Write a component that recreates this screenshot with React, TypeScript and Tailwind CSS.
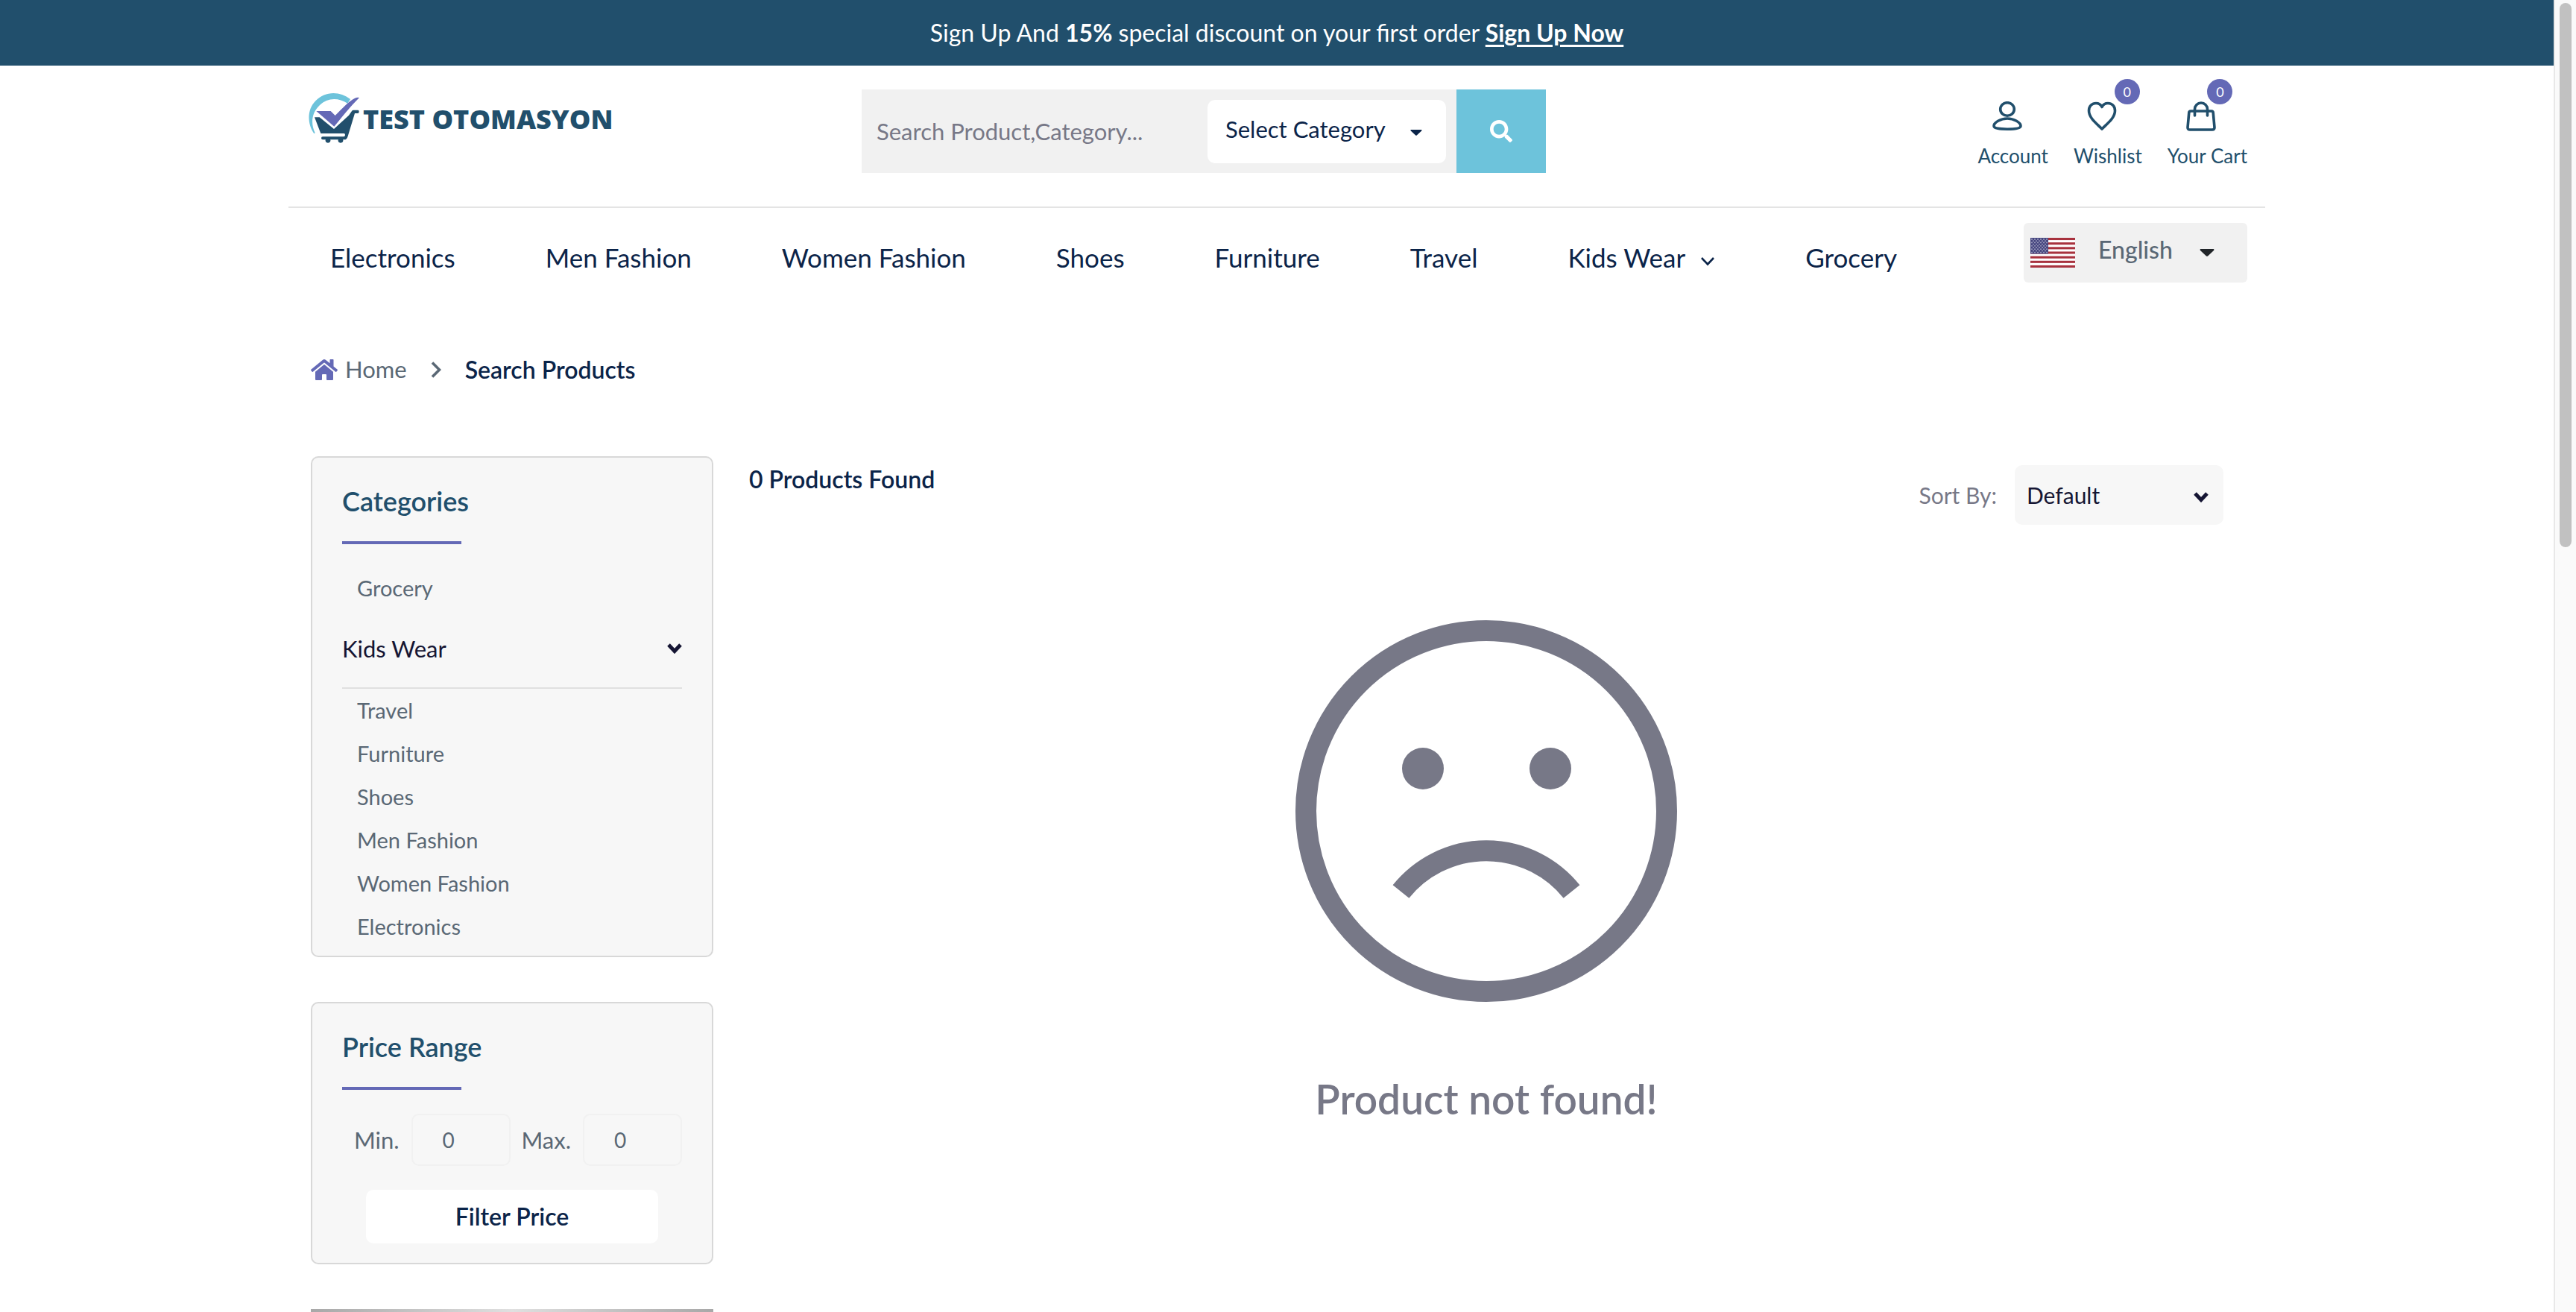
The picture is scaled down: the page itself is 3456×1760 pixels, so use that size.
import React from 'react';
import { FaHome, FaSearch } from 'react-icons/fa';

const Logo = () => (
  <a href="#" aria-label="Test Otomasyon" className="flex h-[70px] items-start text-[#214f6c]">
    <svg viewBox="100 100 210 210" className="size-[70px] shrink-0" aria-hidden="true">
      <path
        fill="#6dc3db"
        d="M125 269C98 230 95 172 132 136 168 98 228 96 271 130L260 147C222 122 178 124 148 154 116 184 110 226 129 266Z"
      />
      <path fill="#6469b6" d="M134 178H192L210 196C238 168 264 139 288 127Q298 122 307 124C270 160 235 205 206 240Z" />
      <path
        fill="#214f6c"
        d="M127 203h20l58 47 60-55 12-17q2-4 7-4h18q4 0 4 6t-4 7h-13l-28 92q-4 14-14 14H160q-6 0-6-6t6-6h84q6 0 6-7t-6-6h-92z"
      />
      <circle cx="181" cy="296" r="10" fill="#214f6c" />
      <circle cx="232" cy="296" r="10" fill="#214f6c" />
    </svg>
    <span className="mt-1 ml-1 font-['Open_Sans'] text-[36px] leading-[66px] font-extrabold whitespace-nowrap">
      TEST OTOMASYON
    </span>
  </a>
);

const Caret = ({ className }: { className: string }) => (
  <svg viewBox="0 0 20 10" className={className} aria-hidden="true">
    <path d="M1 0H19Q20 1 19 2L11 9.500Q10 10 9 9.500L1 2Q0 1 1 0Z" fill="currentColor" />
  </svg>
);

const Chevron = ({ className, weight }: { className: string; weight: number }) => (
  <svg viewBox="0 0 20 14" className={className} fill="none" stroke="currentColor" strokeWidth={weight} aria-hidden="true">
    <path d="M2 2L10 10.500L18 2" />
  </svg>
);

const strokes = { fill: 'none', stroke: 'currentColor', strokeWidth: 3.6, strokeLinejoin: 'round', strokeLinecap: 'round' } as const;

const UserIcon = () => (
  <svg viewBox="0 0 40 40" className="size-10" {...strokes} aria-hidden="true">
    <ellipse cx="20" cy="10.500" rx="9.300" ry="8.800" />
    <path d="M20 23C29 23 38 28.500 38 33C38 36.300 30 37.200 20 37.200S2 36.300 2 33C2 28.500 11 23 20 23Z" />
  </svg>
);

const HeartIcon = () => (
  <svg viewBox="0 0 40 40" className="size-10" {...strokes} aria-hidden="true">
    <path d="M20 37C12 29 2.500 22 2.500 12.500C2.500 6 7 2.500 12 2.500C15.500 2.500 18.500 4.500 20 7.500C21.500 4.500 24.500 2.500 28 2.500C33 2.500 37.500 6 37.500 12.500C37.500 22 28 29 20 37Z" />
  </svg>
);

const BagIcon = () => (
  <svg viewBox="0 0 40 40" className="size-10" {...strokes} aria-hidden="true">
    <path d="M6 13H34Q36 13 36.200 15L38 35Q38 38 35 38H5Q2 38 2 35L3.800 15Q4 13 6 13Z" />
    <path d="M11.500 19V10.500a8.500 8.500 0 0117 0V19" />
  </svg>
);

const Flag = () => (
  <svg viewBox="0 0 60 40" className="h-10 w-[60px]" aria-hidden="true">
    <rect width="60" height="40" fill="#fff" />
    {[0, 2, 4, 6, 8, 10, 12].map((i) => (
      <rect key={i} y={(i * 40) / 13} width="60" height={40 / 13} fill="#a8323e" />
    ))}
    <rect width="24" height="21.500" fill="#46467f" />
    {[0, 1, 2, 3, 4, 5, 6, 7, 8].map((r) =>
      [0, 1, 2, 3, 4, 5].map((c) =>
        r % 2 === 1 && c === 5 ? null : (
          <circle key={`${r}-${c}`} cx={2 + c * 4 + (r % 2) * 2} cy={2 + r * 2.2} r="0.9" fill="#a9a9c6" />
        ),
      ),
    )}
  </svg>
);

const Action = ({ label, icon, badge }: { label: string; icon: React.ReactNode; badge?: string }) => (
  <a href="#" className="flex flex-col items-center gap-4">
    <span className="relative mr-4">
      {icon}
      {badge && (
        <span
          className={`absolute -top-[30px] flex size-[34px] items-center justify-center rounded-full bg-[#6469b6] text-[18px] text-white ${badge}`}
        >
          0
        </span>
      )}
    </span>
    <span className="text-[26px] leading-[34px]">{label}</span>
  </a>
);

const NAV = ['Electronics', 'Men Fashion', 'Women Fashion', 'Shoes', 'Furniture', 'Travel', 'Kids Wear', 'Grocery'];
const CATEGORIES = ['Travel', 'Furniture', 'Shoes', 'Men Fashion', 'Women Fashion', 'Electronics'];

const Card = ({ title, children }: { title: string; children: React.ReactNode }) => (
  <section className="rounded-[10px] border-2 border-[#d8d8d8] bg-[#f7f7f7] px-10 pt-9">
    <h2 className="text-[36px] leading-[44px] font-semibold text-[#214f6c]">{title}</h2>
    <div className="mt-8 h-1 w-40 bg-[#6469b6]" />
    {children}
  </section>
);

const CategoryLink = ({ name }: { name: string }) => (
  <li>
    <a href="#" className="block pl-5 text-[29px] leading-[58px] text-[#5a6875]">
      {name}
    </a>
  </li>
);

const PriceField = ({ id, label }: { id: string; label: string }) => (
  <div className="flex items-center">
    <label htmlFor={id} className="text-[31px] text-[#5a6875]">
      {label}
    </label>
    <input
      id={id}
      defaultValue="0"
      className="ml-4 h-[70px] w-[133px] rounded-[10px] border-2 border-[#f1f1f1] bg-transparent pl-10 text-[28px] text-[#5a6875]"
    />
  </div>
);

export default function App() {
  return (
    <div className="flex h-screen overflow-hidden bg-white font-[Lato,sans-serif] text-[#0b2449]">
      <div className="min-w-0 flex-1">
        <div className="bg-[#214f6c] text-center text-[32px] leading-[88px] text-white">
          Sign Up And <b>15%</b> special discount on your first order{' '}
          <a href="#" className="font-bold underline decoration-[3px] underline-offset-4">
            Sign Up Now
          </a>
        </div>

        <div className="mx-auto max-w-[2652px]">
          <header className="flex h-[191px] items-start border-b-2 border-[#e4e4e4] px-6">
            <div className="w-[745px] shrink-0 pt-[35px] pl-0.5">
              <Logo />
            </div>
            <form className="mt-8 flex h-28 w-[918px]">
              <div className="flex flex-1 items-center bg-[#f1f1f1] pr-3.5">
                <input
                  aria-label="Search"
                  placeholder="Search Product,Category..."
                  className="h-full min-w-0 flex-1 bg-transparent pl-5 text-[31px] outline-none placeholder:text-[#777887]"
                />
                <div className="relative h-[85px] w-80">
                  <select
                    aria-label="Category"
                    className="h-full w-full appearance-none rounded-[10px] bg-white pb-1.5 pl-6 text-[31px]"
                  >
                    <option>Select Category</option>
                  </select>
                  <Caret className="pointer-events-none absolute top-10 right-8 h-2 w-4" />
                </div>
              </div>
              <button
                type="button"
                aria-label="Search"
                className="flex w-[120px] items-center justify-center bg-[#6dc3db] text-white"
              >
                <FaSearch className="size-[30px]" />
              </button>
            </form>
            <div className="mt-12 ml-auto flex gap-[34px] text-[#214f6c]">
              <Action label="Account" icon={<UserIcon />} />
              <Action label="Wishlist" icon={<HeartIcon />} badge="left-[37px]" />
              <Action label="Your Cart" icon={<BagIcon />} badge="left-[28px]" />
            </div>
          </header>

          <div className="flex items-center justify-between px-6 pt-5">
            <nav className="flex items-center gap-[121px] pt-3 pl-8 text-[35px] leading-[44px]">
              {NAV.map((item) => (
                <a key={item} href="#" className="flex items-center whitespace-nowrap">
                  {item}
                  {item === 'Kids Wear' && <Chevron weight={2.6} className="mt-3 ml-5 h-3.5 w-5" />}
                </a>
              ))}
            </nav>
            <button
              type="button"
              className="flex h-20 w-[300px] items-center rounded-md bg-[#f1f1f1] pl-[9px] text-[32px] font-medium text-[#5a6875]"
            >
              <Flag />
              <span className="mb-2 ml-[31px]">English</span>
              <Caret className="ml-9 h-2.5 w-5 text-[#212529]" />
            </button>
          </div>

          <nav aria-label="Breadcrumb" className="flex items-center px-[30px] py-24 text-[31px] leading-[41px]">
            <a href="#" className="flex items-center text-[#5a6875]">
              <FaHome className="mr-2.5 h-8 w-9 text-[#6469b6]" />
              Home
            </a>
            <svg viewBox="0 0 14 22" className="mr-8 ml-8 h-[22px] w-3.5 text-[#5a6875]" fill="none" stroke="currentColor" strokeWidth="3.6" aria-hidden="true">
              <path d="M2 1.500L11.500 11L2 20.500" />
            </svg>
            <span className="text-[32px] font-semibold">Search Products</span>
          </nav>

          <div className="flex gap-12 pr-14 pl-[30px]">
            <aside className="flex w-[540px] shrink-0 flex-col gap-[60px]">
              <Card title="Categories">
                <ul className="mt-[30px] pb-2.5">
                  <CategoryLink name="Grocery" />
                  <li>
                    <button
                      type="button"
                      className="flex h-[106px] w-full items-center justify-between border-b-2 border-[#e0e0e0] text-[31px] text-[#151533]"
                    >
                      Kids Wear
                      <Chevron weight={5} className="h-3.5 w-5" />
                    </button>
                  </li>
                  {CATEGORIES.map((name) => (
                    <CategoryLink key={name} name={name} />
                  ))}
                </ul>
              </Card>

              <Card title="Price Range">
                <div className="mt-8 flex justify-between pl-4">
                  <PriceField id="min" label="Min." />
                  <PriceField id="max" label="Max." />
                </div>
                <div className="mx-8 mt-8 pb-[26px]">
                  <button type="button" className="h-[72px] w-full rounded-[10px] bg-white text-[32px] font-semibold">
                    Filter Price
                  </button>
                </div>
              </Card>

              <div className="h-[400px] bg-linear-to-r from-[#a8a8a8] via-[#e0e0e0] to-[#a8a8a8]" />
            </aside>

            <main className="min-w-0 flex-1 pt-3">
              <div className="flex items-start justify-between">
                <h1 className="text-[32px] leading-[38px] font-semibold">0 Products Found</h1>
                <div className="flex items-center text-[30px]">
                  <label htmlFor="sort" className="mr-6 text-[#777887]">
                    Sort By:
                  </label>
                  <div className="relative h-20 w-[280px]">
                    <select
                      id="sort"
                      className="h-full w-full appearance-none rounded-[10px] bg-[#f7f7f7] pl-4 text-[#151533]"
                    >
                      <option>Default</option>
                    </select>
                    <Chevron weight={5} className="pointer-events-none absolute top-9 right-5 h-3.5 w-5 text-[#151533]" />
                  </div>
                </div>
              </div>

              <div className="mt-32 flex flex-col items-center text-[#777887]">
                <svg viewBox="0 0 512 512" className="size-[512px]" aria-hidden="true">
                  <g fill="none" stroke="currentColor" strokeWidth="28">
                    <circle cx="256" cy="256" r="242" />
                    <path d="M141.500 364A147 147 0 01370.500 364" />
                  </g>
                  <circle cx="171" cy="199" r="28" fill="currentColor" />
                  <circle cx="342" cy="199" r="28" fill="currentColor" />
                </svg>
                <p className="mt-24 text-[55px] leading-[68px] font-semibold">Product not found!</p>
              </div>
            </main>
          </div>
        </div>
      </div>

      <div className="w-[30px] shrink-0 border-l-2 border-[#e8e8e8] bg-[#fafafa] pt-1 pl-1.5" aria-hidden="true">
        <div className="h-[730px] w-4 rounded-full bg-[#c1c1c1]" />
      </div>
    </div>
  );
}
